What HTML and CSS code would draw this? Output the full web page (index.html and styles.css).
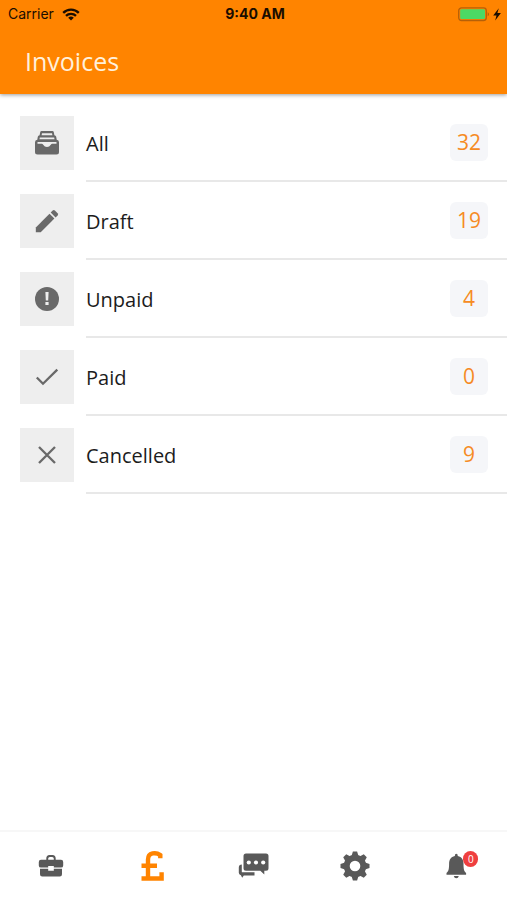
FILE: index.html
```html
<!DOCTYPE html>
<html lang="en">
<head>
<meta charset="utf-8">
<meta name="viewport" content="width=device-width, initial-scale=1">
<title>Invoices</title>
<link rel="stylesheet" href="styles.css">
</head>
<body>
<header class="header">
  <div class="status">
    <div class="status-left">
      <span>Carrier</span>
      <svg width="18" height="13" viewBox="0 0 18 13" aria-hidden="true"><g fill="none" stroke="#1a0d00" stroke-width="2.3"><path d="M1.2 4.9a11 11 0 0 1 15.6 0"/><path d="M4 7.9a7 7 0 0 1 10 0"/></g><path d="M9 12.6 6.200 9.800a4 4 0 0 1 5.600 0z" fill="#1a0d00"/></svg>
    </div>
    <span class="time">9:40 AM</span>
    <div class="status-right">
      <svg width="44" height="15" viewBox="0 0 44 15" aria-hidden="true"><rect x=".7" y=".9" width="27.6" height="12.6" rx="2.8" fill="none" stroke="#b66008" stroke-width="1.3"/><rect x="2.2" y="2.3" width="24.8" height="9.8" rx="1.4" fill="#4cd964"/><path d="M29.7 5.2a2.2 2.2 0 0 1 0 4z" fill="#b66008"/><path d="M40.800 1.200 35.200 8.400h3.300l-1.300 5 5.700-7.400h-3.500z" fill="#1a0d00"/></svg>
    </div>
  </div>
  <h1 class="title">Invoices</h1>
</header>
<main class="main">
  <ul class="list">
    <li><a class="row" href="#all">
      <span class="tile"><svg width="26" height="26" viewBox="0 0 26 26" aria-hidden="true"><path fill="#696969" fill-rule="evenodd" d="M7.600 1h10.800q1.200 0 1.400 1.200l.6 3q1.500.1 1.800 1.600l.5 3q2.300.2 2.300 2.400v9.800q0 2.500-2.500 2.500h-19Q1 24.500 1 22v-9.800q0-2.200 2.300-2.400l.5-3q.3-1.500 1.800-1.600l.6-3Q6.400 1 7.600 1zM8 3.300l-.4 2h10.800l-.4-2zM5.800 7.600l-.3 1.700h15l-.3-1.700zM3.500 12v1.800h4.200q.9 0 1.500.9 1.400 2.300 3.800 2.300t3.800-2.300q.6-.9 1.500-.9h4.200V12z"/></svg></span>
      <span class="body"><span class="name">All</span><span class="count">32</span></span>
    </a></li>
    <li><a class="row" href="#draft">
      <span class="tile"><svg width="26" height="26" viewBox="0 0 26 26" aria-hidden="true"><g fill="#696969"><path d="M1.800 24.200V19.400L15.500 5.700l4.900 4.900L6.700 24.200z"/><path d="m16.700 4.500 2-2q1.100-1 2.200 0l2.700 2.700q1 1.100 0 2.200l-2 2z"/></g></svg></span>
      <span class="body"><span class="name">Draft</span><span class="count">19</span></span>
    </a></li>
    <li><a class="row" href="#unpaid">
      <span class="tile"><svg width="26" height="26" viewBox="0 0 26 26" aria-hidden="true"><circle cx="13" cy="13" r="12" fill="#696969"/><path d="M11.400 6h3.200l-.4 8.500h-2.400zM11.400 16h3.200v3h-3.200z" fill="#eee"/></svg></span>
      <span class="body"><span class="name">Unpaid</span><span class="count">4</span></span>
    </a></li>
    <li><a class="row" href="#paid">
      <span class="tile"><svg width="26" height="26" viewBox="0 0 26 26" aria-hidden="true"><path d="m2.800 13.500 6.200 6.200L23.300 5.600" fill="none" stroke="#696969" stroke-width="2.300"/></svg></span>
      <span class="body"><span class="name">Paid</span><span class="count">0</span></span>
    </a></li>
    <li><a class="row" href="#cancelled">
      <span class="tile"><svg width="26" height="26" viewBox="0 0 26 26" aria-hidden="true"><path d="m5 5 16 16M21 5 5 21" fill="none" stroke="#696969" stroke-width="2.300"/></svg></span>
      <span class="body"><span class="name">Cancelled</span><span class="count">9</span></span>
    </a></li>
  </ul>
</main>
<nav class="tabs" aria-label="Main">
  <a class="tab" href="#jobs" aria-label="Jobs"><svg width="32" height="32" viewBox="0 0 32 32" aria-hidden="true"><g fill="#595959"><path fill-rule="evenodd" d="M11.300 9.700V8.500q0-3.500 3.200-3.500h3q3.200 0 3.200 3.500v1.200H26q2.200 0 2.200 2.200v3.500q0 2.200-2.200 2.200h-7.200V16h-5.600v1.600H6q-2.200 0-2.200-2.200v-3.500q0-2.200 2.200-2.200zm1.900 0h5.600V8.600q0-1.700-1.700-1.700h-2.200q-1.700 0-1.700 1.700z"/><path d="M5 18.800h8.200v2h5.600v-2H27v5.400q0 2.400-2.200 2.400H7.200Q5 26.600 5 24.200z"/></g></svg></a>
  <a class="tab" href="#invoices" aria-label="Invoices" aria-current="page"><svg width="32" height="32" viewBox="0 0 32 32" aria-hidden="true"><g fill="none" stroke="#ff8400" stroke-width="4.400"><path d="M24.300 8.200V5.100C20 2 12 2.300 12 9.600V28"/><path d="M5.500 15.800h15.500M5.500 28.500h20.100v-6.300"/></g></svg></a>
  <a class="tab" href="#messages" aria-label="Messages"><svg width="32" height="32" viewBox="0 0 32 32" aria-hidden="true"><path fill="#595959" d="M8 3.600h20q2.500 0 2.500 2.500v12.200q0 2.500-2.500 2.500h-1.700V24.600l-4-3.800H8q-2.500 0-2.500-2.500V6.100Q5.500 3.600 8 3.600z"/><g fill="#fff"><circle cx="10.800" cy="12.500" r="2.100"/><circle cx="18" cy="12.500" r="2.100"/><circle cx="25.200" cy="12.500" r="2.100"/></g><path fill="#595959" d="M3.800 14.600v7.700h12.700v3.200H5.800l-1.600 2.300-1.300-2.600q-2.100-.6-2.100-2.500v-5.200q0-2.900 3-2.900z"/></svg></a>
  <a class="tab" href="#settings" aria-label="Settings"><svg width="32" height="32" viewBox="0 0 32 32" aria-hidden="true"><g fill="#595959"><circle cx="16" cy="16" r="11.300"/><g id="teeth"><path id="tooth" d="m12.500 6 1.400-4.500h4.200L19.500 6v20l-1.400 4.500h-4.200L12.500 26z"/><use href="#tooth" transform="rotate(90 16 16)"/></g><use href="#teeth" transform="rotate(45 16 16)"/></g><circle cx="16" cy="16" r="5.300" fill="#fff"/></svg></a>
  <a class="tab" href="#notifications" aria-label="Notifications"><span class="bell"><svg width="32" height="32" viewBox="0 0 32 32" aria-hidden="true"><path fill="#595959" d="M16.300 3.800q1.500 0 1.500 2.100c4 .8 5.700 4 5.700 7.600 0 5.500.5 7.700 2.600 9.500v1.700H6.500V23c2.100-1.800 2.600-4 2.600-9.500 0-3.600 1.700-6.800 5.700-7.600q0-2.100 1.500-2.100zM13.800 25.900h5q-.5 2.300-2.500 2.300t-2.500-2.300z"/></svg><span class="alert">0</span></span></a>
</nav>
</body>
</html>
```
FILE: styles.css
```css
* {
  box-sizing: border-box;
}

body {
  margin: 0;
  min-height: 100vh;
  display: flex;
  flex-direction: column;
  background: #fff;
  color: #1c1c1c;
  font-family: "Open Sans", "Noto Sans", sans-serif;
}

.header {
  background: #ff8400;
  box-shadow: 0 1px 4px rgba(0, 0, 0, 0.4);
  padding-bottom: 16px;
}

.status {
  display: grid;
  grid-template-columns: 1fr auto 1fr;
  align-items: center;
  height: 28px;
  padding: 0 5px 0 8px;
  color: #1a0d00;
  font: 14px/20px Inter, sans-serif;
}

.status-left {
  display: flex;
  align-items: center;
  gap: 8px;
}

.status-right {
  display: flex;
  justify-content: flex-end;
}

.time {
  font-weight: 700;
}

.title {
  margin: 0;
  padding: 16px 25px 0;
  color: #fff0dc;
  font-size: 25px;
  font-weight: 400;
  line-height: 34px;
}

.main {
  flex: 1;
  padding-top: 10px;
}

.list {
  margin: 0;
  padding: 0 0 0 20px;
  list-style: none;
}

.row {
  display: flex;
  gap: 12px;
  color: inherit;
  text-decoration: none;
}

.tile {
  display: flex;
  align-items: center;
  justify-content: center;
  width: 54px;
  height: 54px;
  margin: 12px 0;
  background: #eee;
}

.body {
  flex: 1;
  display: flex;
  align-items: center;
  justify-content: space-between;
  padding-right: 19px;
  border-bottom: 2px solid #e8e8e8;
}

.name {
  padding-top: 3px;
  font-size: 20px;
  line-height: 28px;
}

.count {
  width: 38px;
  border-radius: 6px;
  background: #f5f6f9;
  color: #f68b24;
  font-size: 21px;
  line-height: 37px;
  text-align: center;
}

.tabs {
  display: flex;
  height: 70px;
  border-top: 2px solid #f7f7f7;
}

.tab {
  flex: 1;
  display: flex;
  align-items: center;
  justify-content: center;
}

.tab svg {
  display: block;
}

.bell {
  position: relative;
}

.alert {
  position: absolute;
  top: 1px;
  right: -6px;
  width: 15px;
  border-radius: 8px;
  background: #ef3f3f;
  color: #fff;
  font-size: 10px;
  line-height: 16px;
  text-align: center;
}
```
